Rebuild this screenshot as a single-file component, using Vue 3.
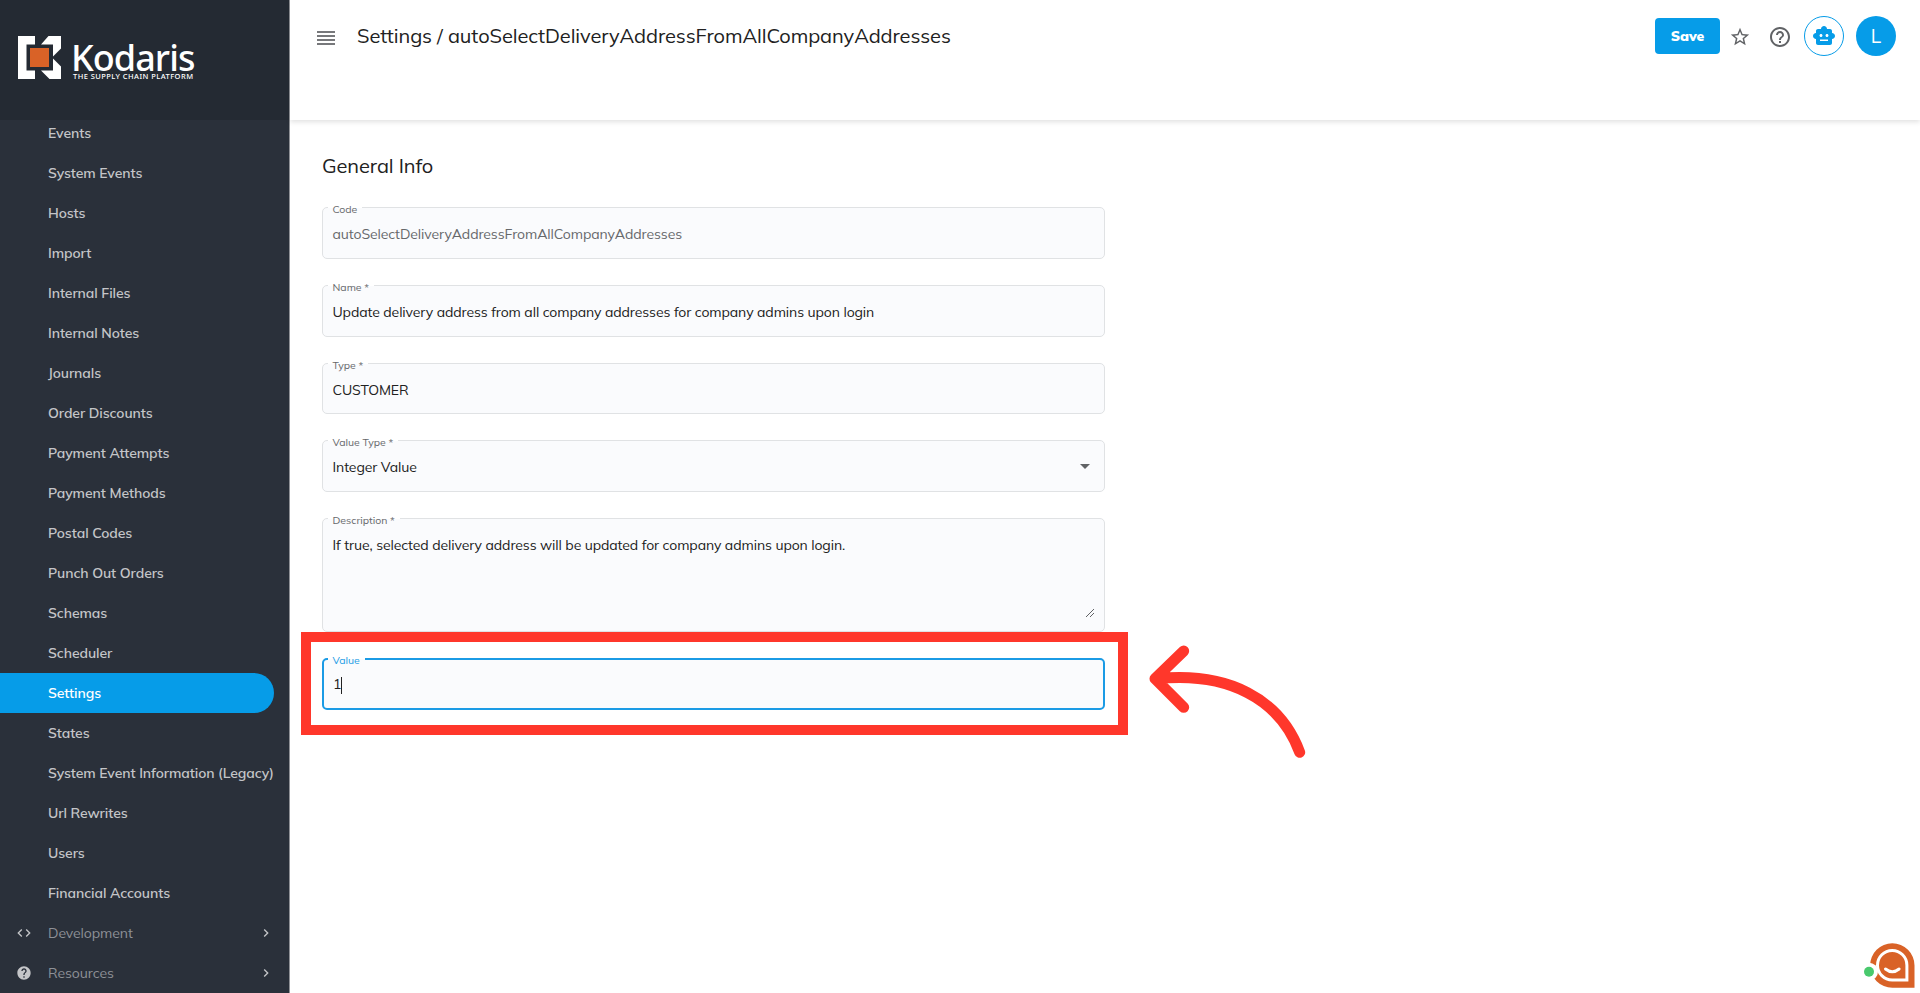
<template>
  <div class="app-shell">
    <aside class="sidebar">
      <div class="brand">
        <svg class="brand-mark" viewBox="0 0 43 43" aria-hidden="true">
          <path fill="#fff" d="M0 0h17v8.500H8.500V34.500H17V43H0z" />
          <path fill="#fff" d="M30.500 0H43v12.500l-8 8v-12H23z" />
          <path fill="#fff" d="M23 34.500h12v-12l8 8V43H31.500z" />
          <rect x="12" y="12" width="19" height="19" fill="#d96227" />
        </svg>
        <div class="brand-text">
          <strong>Kodaris</strong>
          <span>THE SUPPLY CHAIN PLATFORM</span>
        </div>
      </div>

      <nav class="menu">
        <a v-for="item in menuItems" :key="item" class="menu-item" :class="{ active: item === activeItem }">
          <span class="menu-label">{{ item }}</span>
        </a>
        <a v-for="group in menuGroups" :key="group.name" class="menu-item group">
          <svg class="group-icon" viewBox="0 0 24 24" aria-hidden="true">
            <path :d="group.icon" />
          </svg>
          <span class="menu-label">{{ group.name }}</span>
          <svg class="chevron" viewBox="0 0 24 24" aria-hidden="true">
            <path d="M10 6 8.590 7.410 13.170 12l-4.580 4.590L10 18l6-6z" />
          </svg>
        </a>
      </nav>
    </aside>

    <div class="content">
      <header class="topbar">
        <button class="burger" type="button" aria-label="Menu">
          <i v-for="n in 4" :key="n" />
        </button>
        <h1>Settings / {{ fields[0].value }}</h1>

        <div class="actions">
          <button class="save-btn" type="button">Save</button>
          <svg class="action-icon star" viewBox="0 0 24 24" aria-hidden="true">
            <path d="m22 9.240-7.190-.62L12 2 9.190 8.630 2 9.240l5.460 4.730L5.820 21 12 17.270 18.180 21l-1.630-7.030zM12 15.400l-3.760 2.270 1-4.280-3.320-2.880 4.380-.38L12 6.100l1.710 4.040 4.380.38-3.320 2.880 1 4.280z" />
          </svg>
          <svg class="action-icon help" viewBox="0 0 24 24" aria-hidden="true">
            <path d="M11 18h2v-2h-2zm1-16C6.480 2 2 6.480 2 12s4.480 10 10 10 10-4.480 10-10S17.520 2 12 2m0 18c-4.410 0-8-3.590-8-8s3.590-8 8-8 8 3.590 8 8-3.590 8-8 8m0-14c-2.210 0-4 1.790-4 4h2c0-1.100.9-2 2-2s2 .9 2 2c0 2-3 1.750-3 5h2c0-2.250 3-2.500 3-5 0-2.210-1.790-4-4-4" />
          </svg>
          <button class="bot-btn" type="button" aria-label="Assistant">
            <svg viewBox="0 0 24 24" aria-hidden="true">
              <path d="M20 9V7c0-1.100-.9-2-2-2h-3c0-1.660-1.340-3-3-3S9 3.340 9 5H6c-1.100 0-2 .9-2 2v2c-1.660 0-3 1.340-3 3s1.340 3 3 3v4c0 1.100.9 2 2 2h12c1.100 0 2-.9 2-2v-4c1.660 0 3-1.340 3-3s-1.340-3-3-3M7.500 11.500c0-.83.67-1.500 1.500-1.500s1.500.67 1.500 1.500S9.830 13 9 13s-1.500-.67-1.500-1.500M16 17H8v-1.500h8zm-1-4c-.83 0-1.500-.67-1.500-1.500S14.170 10 15 10s1.500.67 1.500 1.500S15.830 13 15 13" />
            </svg>
          </button>
          <div class="avatar">L</div>
        </div>
      </header>

      <main class="page">
        <h2>General Info</h2>

        <form class="form">
          <div
            v-for="field in fields"
            :key="field.label"
            class="field"
            :class="{ disabled: field.disabled, tall: field.multiline, focused: field.focused }"
          >
            <span class="field-label">{{ field.label }}</span>
            <span class="field-value">{{ field.value }}</span>
            <i v-if="field.focused" class="caret" />
            <i v-if="field.select" class="arrow" />
            <svg v-if="field.multiline" class="resizer" viewBox="0 0 10 10" aria-hidden="true">
              <path d="M1 9 9 1M5 9l4-4" />
            </svg>
            <div v-if="field.focused" class="highlight" />
          </div>
        </form>

        <svg class="pointer" viewBox="0 0 170 130" aria-hidden="true">
          <path d="M40.700 15 12 42.700l28.700 28.600M12.500 43C85 35 137 63 156.700 116.300" />
        </svg>
      </main>
    </div>

    <div class="chat">
      <svg viewBox="0 0 56 50" aria-hidden="true">
        <path class="bubble" d="M28.300.3a22.200 22.200 0 0 1 22.200 22.200v22.200H28.300a22.200 22.200 0 0 1 0-44.400z" />
        <path class="face" d="M28.200 7.500a14.700 14.700 0 0 1 14.700 14.700v14.700H28.200a14.700 14.700 0 0 1 0-29.400z" />
        <path class="face smile" d="M21.500 26q6.800 5.400 13.600 0" />
        <circle cx="5" cy="28.700" r="9" fill="#fff" />
        <circle cx="5" cy="28.700" r="5" fill="#49c96d" />
      </svg>
    </div>
  </div>
</template>

<script setup>
import { ref } from "vue";

const activeItem = ref("Settings");

const menuItems = [
  "Events",
  "System Events",
  "Hosts",
  "Import",
  "Internal Files",
  "Internal Notes",
  "Journals",
  "Order Discounts",
  "Payment Attempts",
  "Payment Methods",
  "Postal Codes",
  "Punch Out Orders",
  "Schemas",
  "Scheduler",
  "Settings",
  "States",
  "System Event Information (Legacy)",
  "Url Rewrites",
  "Users",
  "Financial Accounts",
];

const menuGroups = [
  {
    name: "Development",
    icon: "M9.400 16.600 4.800 12l4.600-4.600L8 6l-6 6 6 6zm5.200 0 4.600-4.600-4.600-4.600L16 6l6 6-6 6z",
  },
  {
    name: "Resources",
    icon: "M12 2C6.480 2 2 6.480 2 12s4.480 10 10 10 10-4.480 10-10S17.520 2 12 2m1 17h-2v-2h2zm2.070-7.750-.9.920C13.450 12.900 13 13.500 13 15h-2v-.5c0-1.100.45-2.100 1.170-2.830l1.240-1.260c.37-.36.59-.86.59-1.410 0-1.100-.9-2-2-2s-2 .9-2 2H8c0-2.210 1.790-4 4-4s4 1.790 4 4c0 .88-.36 1.680-.93 2.250",
  },
];

const fields = ref([
  { label: "Code", value: "autoSelectDeliveryAddressFromAllCompanyAddresses", disabled: true },
  { label: "Name *", value: "Update delivery address from all company addresses for company admins upon login" },
  { label: "Type *", value: "CUSTOMER" },
  { label: "Value Type *", value: "Integer Value", select: true },
  {
    label: "Description *",
    value: "If true, selected delivery address will be updated for company admins upon login.",
    multiline: true,
  },
  { label: "Value", value: "1", focused: true },
]);
</script>

<style>
body {
  margin: 0;
  overflow: hidden;
}
</style>

<style scoped>
.app-shell {
  position: relative;
  display: flex;
  height: 100vh;
  overflow: hidden;
  background: #fff;
  color: #212121;
  font-family: Mulish, Muli, Lato, "Open Sans", sans-serif;
  font-size: 14px;
}

.app-shell *,
.app-shell *::before,
.app-shell *::after {
  box-sizing: border-box;
}

button {
  padding: 0;
  border: 0;
  background: none;
  font: inherit;
}

.sidebar {
  display: flex;
  flex-direction: column;
  flex: none;
  width: 290px;
  overflow: hidden;
  border-right: 1px solid #8f9196;
  background: #2a303a;
}

.brand {
  z-index: 1;
  display: flex;
  flex: none;
  gap: 10px;
  height: 120px;
  padding: 36px 0 0 18px;
  background: #242a33;
  color: #fff;
}

.brand-mark {
  width: 43px;
  height: 43px;
}

.brand-text {
  display: flex;
  flex-direction: column;
  font-family: "Noto Sans", sans-serif;
}

.brand-text strong {
  font-size: 36px;
  font-weight: 500;
  line-height: 44px;
  letter-spacing: -0.95px;
}

.brand-text span {
  margin: -8px 0 0 2px;
  font-size: 7.500px;
  font-weight: 500;
  line-height: 9px;
  letter-spacing: 0.45px;
}

.menu {
  margin-top: -7px;
}

.menu-item {
  display: flex;
  align-items: center;
  width: 274px;
  height: 40px;
  padding-left: 48px;
  color: #c4c5c8;
  font-weight: 600;
  letter-spacing: -0.08px;
  white-space: nowrap;
}

.menu-item.active {
  border-radius: 0 20px 20px 0;
  background: #069ce8;
  color: #fff;
}

.menu-item.group {
  padding-left: 16px;
  color: #8e9197;
  font-weight: 400;
}

.group-icon {
  width: 16px;
  height: 16px;
  margin-right: 16px;
  fill: #c4c5c8;
}

.chevron {
  width: 16px;
  height: 16px;
  margin-left: auto;
  fill: #c4c5c8;
}

.content {
  flex: 1;
  min-width: 0;
}

.topbar {
  display: flex;
  align-items: flex-start;
  height: 120px;
  padding: 16px 24px 0 27px;
  box-shadow: 0 2px 5px rgba(0, 0, 0, 0.12);
}

.burger {
  display: grid;
  gap: 2px;
  width: 18px;
  margin-top: 15px;
}

.burger i {
  height: 2px;
  background: #77787b;
}

h1,
h2 {
  margin: 0;
  font-size: 20px;
  font-weight: 400;
  letter-spacing: -0.07px;
}

h1 {
  margin-left: 22px;
  line-height: 40px;
}

.actions {
  display: flex;
  align-items: center;
  margin-left: auto;
}

.save-btn {
  width: 65px;
  height: 36px;
  border-radius: 4px;
  background: #069ce8;
  color: #fff;
  font-weight: 900;
}

.action-icon {
  width: 24px;
  height: 24px;
  fill: #616366;
}

.star {
  width: 22px;
  margin: 2px 0 0 9px;
}

.help {
  margin: 2px 12px 0 17px;
}

.bot-btn {
  display: grid;
  place-items: center;
  width: 40px;
  height: 40px;
  border: 1px solid #069ce8;
  border-radius: 50%;
}

.bot-btn svg {
  width: 24px;
  fill: #069ce8;
}

.avatar {
  display: grid;
  place-items: center;
  width: 40px;
  height: 40px;
  margin-left: 12px;
  border-radius: 50%;
  background: #069ce8;
  color: #fff;
  font-size: 19px;
}

.page {
  position: relative;
  padding: 32px 32px 0;
}

h2 {
  line-height: 28px;
}

.form {
  display: grid;
  gap: 26px;
  width: 783px;
  margin-top: 27.400px;
}

.field {
  position: relative;
  height: 51.600px;
  padding: 15px 9.500px 0;
  border: 1px solid #e0e2e4;
  border-radius: 5px;
  background: #fafbfd;
  line-height: 22px;
  letter-spacing: -0.1px;
}

.field.tall {
  height: 114.400px;
}

.field.disabled .field-value {
  color: #66686b;
}

.field.focused {
  padding: 13px 9px 0;
  border: 2px solid #1b9be5;
}

.field-label {
  position: absolute;
  top: -4px;
  left: 4.500px;
  padding: 0 5px;
  background: linear-gradient(#fff 4px, #fafbfd 4px);
  color: #66686b;
  font-size: 10.500px;
  letter-spacing: 0;
  line-height: 11px;
}

.focused .field-label {
  top: -5px;
  left: 3.500px;
  color: #1b9be5;
}

.arrow {
  position: absolute;
  top: 23px;
  right: 14px;
  border: 5px solid transparent;
  border-top-color: #616366;
  border-bottom: 0;
}

.resizer {
  position: absolute;
  right: 9px;
  bottom: 13px;
  width: 10px;
  height: 10px;
  fill: none;
  stroke: #616366;
}

.highlight {
  position: absolute;
  inset: -28px -25px -27px -23px;
  border: 10px solid #ff372b;
}

.caret {
  display: inline-block;
  width: 1px;
  height: 17px;
  background: #222;
  vertical-align: middle;
}

.pointer {
  position: absolute;
  top: 516px;
  left: 853px;
  width: 170px;
  height: 130px;
  fill: none;
  stroke: #ff372b;
  stroke-width: 11;
  stroke-linecap: round;
  stroke-linejoin: round;
}

.chat {
  position: absolute;
  right: 0;
  bottom: 0;
  width: 56px;
  height: 50px;
}

.chat svg {
  overflow: visible;
}

.bubble {
  fill: #d96227;
}

.face {
  fill: none;
  stroke: #fff;
  stroke-width: 3;
}

.smile {
  stroke-linecap: round;
}
</style>
